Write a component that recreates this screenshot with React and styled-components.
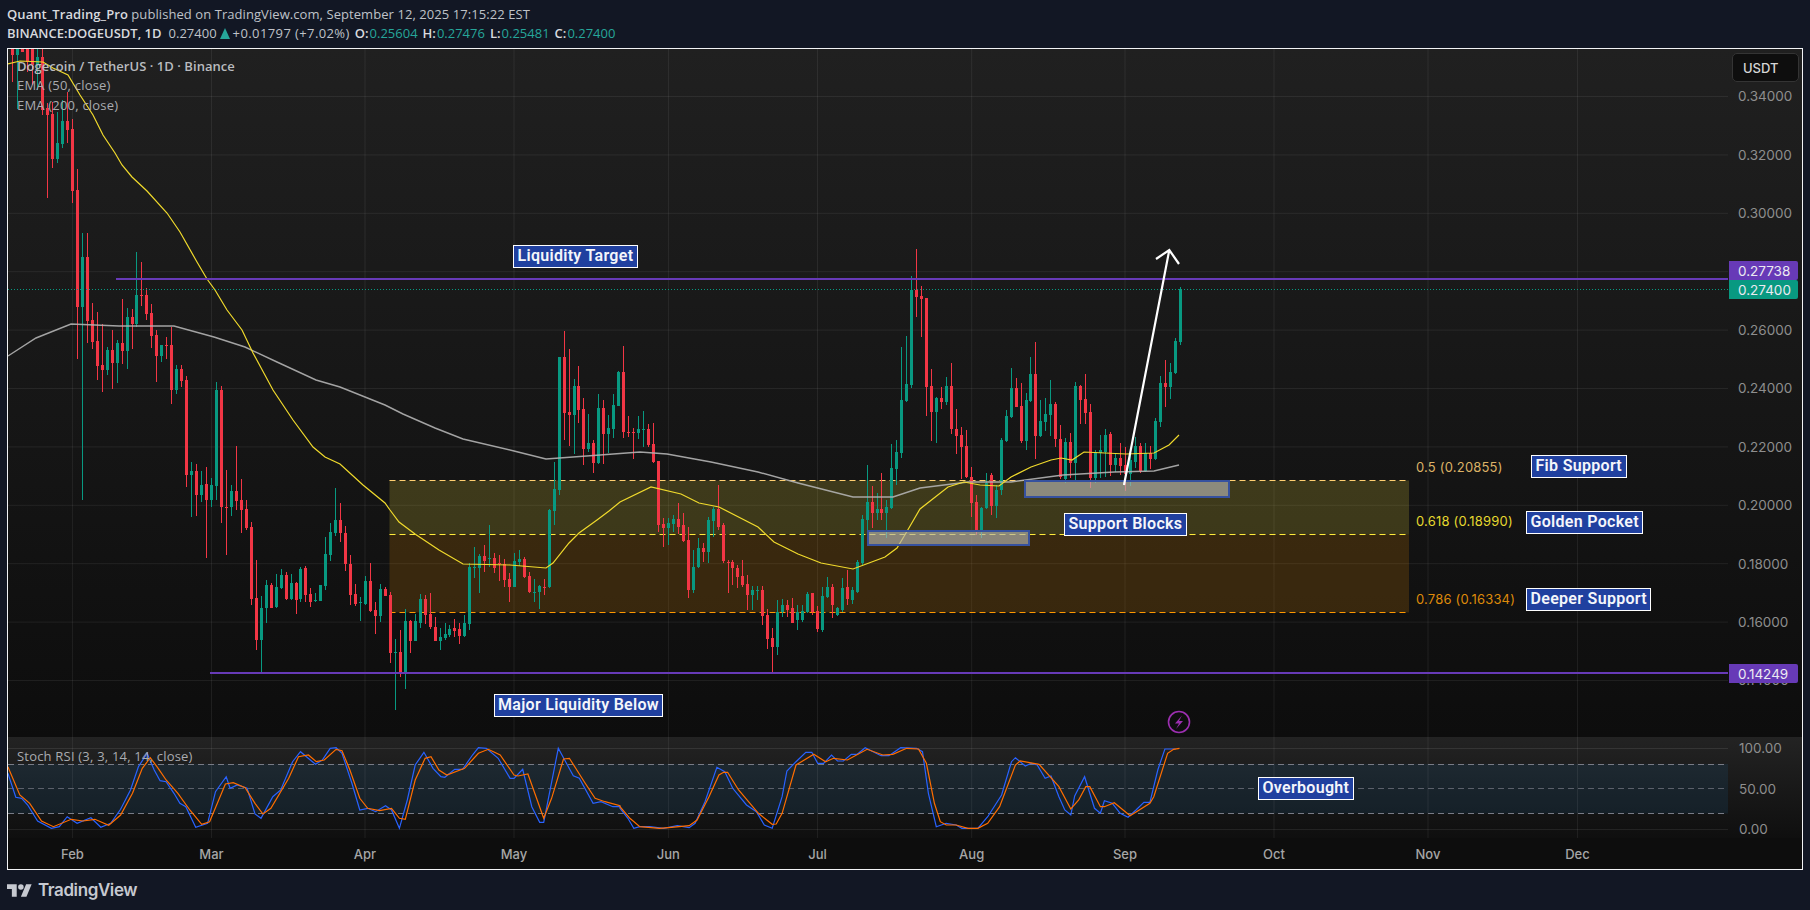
import React from "react";
import styled, { createGlobalStyle } from "styled-components";

const Global = createGlobalStyle`
  html, body { margin: 0; padding: 0; background: #121724; }
  #root { width: 1810px; height: 910px; overflow: hidden; }
`;

const BODY = "'Open Sans', 'Liberation Sans', sans-serif";
const AXIS = "Inter, 'Liberation Sans', sans-serif";

/* [x, bodyTop, bodyBottom, wickHigh, wickLow, isUp] in page pixels */
const CANDLES = [
[12,40,55,40,82,0],[17,40,55,40,109,1],[22,40,52,40,52,0],[27,40,62,40,72,0],[32,40,65,40,85,0],[37,57,65,48,90,1],[42,57,110,49,115,0],[47,108,115,103,198,0],[52,114,159,102,168,0],[57,143,159,112,163,1],[62,121,144,100,148,1],[67,121,130,92,143,0],[72,129,191,119,203,0],[77,190,307,169,359,0],[82,257,307,233,500,1],[87,257,321,233,343,0],
[92,320,342,303,349,0],[97,341,366,312,380,0],[102,365,370,324,392,0],[107,350,370,347,375,1],[112,350,363,330,389,0],[117,343,363,340,383,1],[122,343,351,299,364,0],[127,317,351,308,369,1],[132,317,324,309,349,0],[136.5,295,324,252,327,1],[141,295,296,262,306,0],[146,295,314,288,320,0],[151,313,336,304,348,0],[156,335,356,330,382,0],[161,345,356,345,362,1],[166,345,346,337,359,0],[171,345,390,327,404,0],[176,369,390,365,394,1],[181,369,381,365,387,0],[186,380,475,376,487,0],[191,471,475,462,517,1],[196,471,495,464,516,0],[201,485,495,471,502,1],[206,484,500,467,558,0],[211.5,485,500,478,507,1],[216,390,486,382,500,1],[221.5,390,507,386,523,0],[226,507,508,470,555,0],[231,491,507,485,516,1],[236,491,501,446,510,0],[241,500,510,479,533,0],[246,509,528,500,530,0],[251.5,527,599,522,605,0],[256.5,598,640,560,650,0],[261,608,640,596,672,1],[266.5,585,608,580,623,1],[271,585,608,583,608,0],[276,587,607,574,608,1],[281,575,588,569,589,1],[286,575,599,572,600,0],[291,583,599,574,600,1],[296,583,600,582,614,0],[300.5,569,599,567,602,1],[305,568,595,566,602,0],[310,594,602,588,607,0],[315.5,600,601,593,602,1],[320,585,601,585,601,1],[325.5,554,586,537,590,1],[330.5,532,555,523,561,1],[335,520,533,488,536,1],[340.5,520,533,503,542,0],[345,533,564,526,571,0],[350,564,595,555,605,0],[355.5,594,604,584,606,0],[360.5,602,603,597,621,1],[365,581,604,576,605,1],[370.5,581,611,563,612,0],[375,610,616,602,634,0],[380,589,616,584,622,1],[385.5,589,596,587,596,0],[390,595,653,592,663,0],[395.5,652,653,639,710,1],[400.5,652,673,630,677,0],[405.5,621,673,609,689,1],[410.5,621,641,620,653,0],[415.5,621,641,614,641,1],[420,599,623,594,628,1],[425.5,599,615,595,624,0],[430,614,627,593,629,0],[435,627,641,617,641,0],[440,637,641,628,650,1],[445,634,638,623,640,1],[449.5,629,635,625,637,1],[454.5,628,631,619,637,0],[459.5,629,636,623,644,0],[464.5,623,636,615,637,1],[469.5,567,624,563,630,1],[474.5,567,568,547,578,1],[479,556,568,554,593,1],[484.5,556,561,545,572,0],[489.5,558,559,525,567,1],[494,558,568,553,573,0],[499,563,564,555,581,0],[504.5,564,580,559,587,0],[509,579,587,573,602,0],[514.5,561,587,553,587,1],[519.5,559,562,550,566,1],[524.5,559,577,557,578,0],[529.5,576,592,572,593,0],[534,592,593,579,602,1],[539,586,592,585,609,1],[544,587,588,579,595,0],[549,510,587,509,588,1],[554.5,489,511,462,525,1],[559.5,357,490,357,495,1],
[564.5,357,413,331,440,0],[569.5,412,415,349,446,0],[574.5,386,415,379,454,1],[578.5,386,410,366,423,0],[583.5,409,449,398,465,0],[588.5,443,449,414,452,1],[593.5,443,463,440,473,0],[598.5,408,463,394,464,1],[603.5,408,434,400,464,0],[608.5,428,434,415,453,1],[613.5,405,429,394,438,1],[618.5,372,406,371,406,1],[623.5,372,432,346,438,0],[628.5,432,433,416,437,0],[633.5,432,433,428,459,0],[638.5,429,433,416,439,1],[643.5,429,430,411,447,1],[648.5,429,445,424,447,0],[653.5,444,462,423,463,0],[658.5,461,525,461,532,0],[663.5,524,528,518,547,0],[668.5,523,528,518,545,1],[673.5,519,524,515,532,1],[678.5,519,527,503,534,0],[683.5,525,541,513,542,0],[688.5,540,590,527,598,0],[693.5,567,590,550,593,1],[698.5,548,567,538,568,1],[703,548,552,543,562,0],[708.5,520,552,517,563,1],[713,509,521,507,537,1],[718,509,527,485,530,0],[723,525,561,523,563,0],[728,562,563,560,593,0],[732.5,562,568,560,585,0],[737.5,568,577,565,588,0],[742.5,576,585,560,587,0],[747.5,584,595,575,610,0],[752,590,595,586,610,1],[757.5,590,591,586,600,1],[762.5,590,616,586,625,0],[767.5,615,639,609,649,0],[772.5,638,647,628,672,0],[777.5,612,647,600,655,1],[782.5,605,612,599,617,1],[787,605,610,600,617,0],[792,608,623,598,623,0],[797,612,620,605,630,1],[802,611,620,605,622,1],[807,594,612,592,613,1],[812,593,612,593,615,0],[817,611,629,606,632,0],[822,596,630,587,632,1],[827,587,597,577,598,1],[832,587,605,584,618,0],[837,608,615,607,616,1],[842,588,610,578,612,1],[847,587,599,570,605,0],[852,590,600,587,604,1],[857,562,592,560,593,1],[862.5,519,563,515,565,1],[867,502,520,465,530,1],[872,502,513,486,528,0],[877,509,513,493,520,1],[881.5,509,513,473,520,0],[886,507,513,500,538,1],[891.5,468,508,444,509,1],[896.5,452,469,440,485,1],[901.5,400,453,347,458,1],[906.5,384,401,336,402,1],[911.5,290,385,276,388,1],[916.5,290,297,249,317,0],[921.5,296,299,286,337,0],[926.5,298,387,298,416,0],[931.5,386,412,369,441,0],[936.5,398,412,397,443,1],[941.5,398,402,387,409,0],[946.5,386,402,377,405,1],[951.5,386,429,363,434,0],[956.5,429,436,409,454,0],[961.5,435,447,427,479,0],[966.5,446,477,430,478,0],[971.5,477,503,467,517,0],[976.5,502,531,495,535,0],[981.5,508,531,507,538,1],[986.5,483,508,473,509,1],[991.5,475,506,473,515,0],[996.5,490,506,485,518,1],[1001,440,490,438,495,1],[1006.5,416,441,410,442,1],[1011.5,388,417,368,418,1],[1016.5,388,407,378,407,0],[1021.5,406,441,383,443,0],[1026,400,441,393,450,1],[1030.5,374,401,357,402,1],[1035.5,374,436,342,459,0],[1040.5,421,436,400,437,1],[1045,414,422,398,431,1],[1050.5,404,415,380,436,1],[1055,404,439,402,447,0],[1060,439,477,425,479,0],[1065.5,442,479,438,483,1],[1070.5,442,463,433,478,0],[1075,386,463,382,482,1],[1080.5,386,400,385,424,0],[1085.5,399,413,374,424,0],[1090.5,412,478,404,488,0],[1095.5,452,478,450,483,1],[1100,450,453,435,478,1],[1105.5,435,452,429,477,1],[1110.5,434,465,432,476,0],[1115,458,465,453,472,1],[1120.5,458,466,443,475,0],[1125.5,465,474,447,491,0],[1130,460,474,450,486,1],[1135,446,462,437,468,1],[1140,446,471,443,473,0],[1145,453,471,443,472,1],[1150,453,459,446,469,0],[1155,421,459,418,460,1],[1160,383,422,376,427,1],[1165,383,387,360,407,0],[1170,372,387,363,399,1],[1175,341,373,338,374,1],[1180,289,342,287,345,1],
];

const EMA50 = "7,64 20,61 43,62 53,68 68,75 80,95 93,115 103,135 115,153 122,165 132,177 147,191 167,213 180,232 197,262 207,279 215,290 227,310 242,330 253,353 273,390 293,420 313,447 325,457 340,464 363,485 385,503 390,510 399,522 415,534 439,550 463,564 510,565 534,567 546,568 553,563 569,543 579,533 597,520 609,511 620,502 651,487 681,494 699,503 719,507 758,527 774,542 798,554 821,563 853,569 885,557 897,548 906,533 920,509 948,487 964,482 980,485 999,486 1011,477 1031,467 1051,460 1061,458 1072,460 1084,452 1126,454 1154,453 1169,445 1179,435";
const EMA200 = "8,356 36,338 71,324 119,326 174,326 214,337 245,347 277,362 316,380 340,387 385,405 403,414 435,428 463,439 514,451 546,459 573,457 600,455 640,452 667,454 711,462 758,472 798,483 853,497 893,497 920,488 968,482 1011,482 1063,475 1114,472 1154,471 1179,465";

const mapStoch = (pairs, ox) => pairs.map(([z, y]) => `${(ox + z / 2.529).toFixed(1)},${(710 + y / 3).toFixed(1)}`).join(" ");
const BLUE = mapStoch([[20,190],[40,262],[55,265],[70,285],[95,333],[130,355],[150,350],[170,320],[195,340],[230,323],[255,352],[280,340],[305,298],[330,240],[350,170],[372,130],[390,180],[405,212],[420,215],[440,250],[455,280],[470,290],[495,352],[525,340],[545,245],[572,200],[582,235],[600,225],[625,235],[645,312],[660,325],[690,260],[710,240],[740,155],[760,125],[775,140],[798,163],[815,150],[835,115],[850,113],[865,130],[890,220],[910,300],[930,295],[950,305],[975,287],[990,300],[1010,355],[1030,270],[1050,165],[1072,127],[1095,175],[1115,200],[1125,202],[1150,178],[1170,178],[1195,135],[1210,113],[1230,115],[1260,145],[1290,205],[1300,205],[1322,178],[1345,290],[1365,337],[1375,337],[1412,115],[1435,165],[1450,197],[1465,205],[1500,280],[1520,275],[1550,290],[1568,290]], 0)
  + " " + mapStoch([[0,295],[20,325],[35,355],[50,350],[75,350],[110,355],[145,347],[175,353],[190,340],[215,275],[245,172],[265,185],[285,235],[320,285],[345,305],[365,345],[385,355],[410,260],[422,183],[445,155],[470,127],[485,127],[500,160],[515,160],[535,135],[550,153],[565,153],[585,133],[600,133],[620,113],[660,137],[680,137],[710,113],[750,115],[765,125],[780,250],[800,350],[825,340],[850,345],[865,355],[905,355],[930,320],[965,255],[990,155],[1000,143],[1025,168],[1040,160],[1055,165],[1075,205],[1090,198],[1110,260],[1125,300],[1140,315],[1150,258],[1175,200],[1200,295],[1215,310],[1225,272],[1245,280],[1265,310],[1285,322],[1305,300],[1325,277],[1340,277],[1360,180],[1378,117],[1405,117]], 620);
const ORANGE = mapStoch([[20,170],[50,255],[75,280],[105,333],[135,350],[180,328],[210,333],[240,328],[275,346],[305,315],[335,250],[360,175],[380,143],[400,175],[420,210],[450,250],[480,300],[510,343],[530,335],[570,222],[590,218],[620,233],[645,280],[665,312],[685,295],[730,205],[755,140],[780,135],[800,155],[820,150],[850,118],[865,122],[885,180],[910,265],[930,295],[960,302],[990,295],[1010,325],[1025,328],[1050,210],[1075,145],[1090,140],[1110,180],[1130,195],[1175,175],[1210,130],[1235,118],[1265,135],[1300,195],[1310,198],[1335,192],[1375,325],[1395,265],[1425,147],[1440,145],[1480,220],[1505,265],[1530,275],[1568,287]], 0)
  + " " + mapStoch([[0,290],[25,325],[50,350],[100,355],[130,352],[175,347],[195,330],[225,260],[250,195],[262,187],[272,187],[300,240],[350,310],[385,343],[395,342],[410,310],[445,165],[490,133],[520,155],[540,145],[575,150],[625,118],[665,135],[690,133],[725,115],[755,117],[775,160],[795,280],[810,335],[825,345],[850,345],[880,355],[905,355],[930,340],[960,290],[1000,165],[1012,153],[1060,163],[1110,230],[1140,297],[1160,270],[1178,230],[1188,230],[1215,290],[1225,290],[1250,278],[1290,317],[1340,280],[1350,260],[1385,130],[1400,118],[1415,115]], 620);

const MONTHS = [["Feb",72.4],["Mar",211.5],["Apr",365],["May",514],["Jun",668.4],["Jul",817.5],["Aug",971.7],["Sep",1125],["Oct",1274],["Nov",1428],["Dec",1577.5]];
const PRICE_GRID = [96.5,154.9,213.3,271.7,330.1,388.5,446.9,505.3,563.7,622.1,680.5];
const PRICES = ["0.34000","0.32000","0.30000","0.28000","0.26000","0.24000","0.22000","0.20000","0.18000","0.16000","0.14000"];
const TAGS = [
  ["Liquidity Target", 505, 195],
  ["Major Liquidity Below", 485.5, 644],
  ["Support Blocks", 1056, 463],
  ["Fib Support", 1523, 405],
  ["Golden Pocket", 1518, 461],
  ["Deeper Support", 1518, 538],
];
const FIBS = [
  ["0.5 (0.20855)", "#dcb266", 409],
  ["0.618 (0.18990)", "#e6d92f", 463],
  ["0.786 (0.16334)", "#de8a0a", 541],
];
const OHLC = [["O:", "0.25604"], ["H:", "0.27476"], ["L:", "0.25481"], ["C:", "0.27400"]];

const Page = styled.div`
  width: 1810px; height: 910px; background: #121724; display: flex; flex-direction: column; overflow: hidden;
`;
const Header = styled.header`
  height: 48px; box-sizing: border-box; padding: 5px 0 0 7px; display: flex; flex-direction: column;
  font: 400 13px/19px ${BODY}; color: #bfc2c8;
`;
const HeaderLine = styled.div`
  display: flex; align-items: center; height: 19px; white-space: pre;
`;
const PublishLine = styled(HeaderLine)`
  letter-spacing: 0.07px;
`;
const Strong = styled.span`
  font-weight: 600; color: #d8dade;
`;
const Last = styled.span`
  margin-left: 7px;
`;
const Change = styled.span`
  letter-spacing: 0.4px;
`;
const OhlcLabel = styled(Strong)`
  margin-left: 5px;
`;
const Up = styled.span`
  color: #26a69a; margin-left: 1px;
`;
const Triangle = styled.i`
  width: 0; height: 0; border-left: 5.5px solid transparent; border-right: 5.5px solid transparent;
  border-bottom: 11px solid #26a69a; margin: 0 3px;
`;
const Frame = styled.main`
  margin-left: 7px; width: 1796px; height: 822px; box-sizing: border-box; border: 1px solid #f2f3f5;
  display: flex; flex-direction: column; background: #0d0d0d;
`;
const Pane = styled.section`
  display: flex; height: ${p => p.$h}px; background: linear-gradient(${p => p.$from}, ${p => p.$to});
`;
const Plot = styled.div`
  position: relative; width: 1720px; height: 100%;
`;
const ChartSvg = styled.svg`
  display: block;
`;
const Legend = styled.div`
  position: absolute; left: 9px; top: 8px; display: flex; flex-direction: column; gap: 0.4px;
  font: 400 13px/19px ${BODY}; letter-spacing: 0.2px; color: #a9abb0;
`;
const LegendTitle = styled.div`
  font-weight: 600; color: #b9bbbf; letter-spacing: 0.05px;
`;
const StochTitle = styled.div`
  position: absolute; left: 9px; top: 10px; font: 400 13px/19px ${BODY}; letter-spacing: 0.2px; color: #a9abb0;
`;
const Tag = styled.div`
  position: absolute; left: ${p => p.$x}px; top: ${p => p.$y}px; box-sizing: border-box; height: 23px;
  padding: 0 3.5px; border: 1.5px solid #fff; background: #20409f; color: #f4f6fb;
  font: 600 16px/20px Roboto, 'Liberation Sans', sans-serif; letter-spacing: 0.3px; white-space: nowrap;
`;
const FibLabel = styled.div`
  position: absolute; left: 1408px; top: ${p => p.$y}px; font: 400 13px/18px ${AXIS}; letter-spacing: 0.2px; color: ${p => p.$c}; white-space: nowrap;
`;
const PriceAxis = styled.div`
  position: relative; width: 74px; height: 100%; box-sizing: border-box; padding-left: ${p => p.$left}px;
  font: 400 13.5px/16px ${AXIS}; color: #8e8e8e;
`;
const TickStack = styled.div`
  display: flex; flex-direction: column; margin-top: ${p => p.$top}px;
`;
const Tick = styled.div`
  height: ${p => p.$h}px; display: flex; align-items: center;
`;
const CurrencyBox = styled.div`
  position: absolute; left: 4px; top: 4px; width: 67px; height: 29px; box-sizing: border-box;
  background: #0e0e0e; border: 1px solid #343434; border-radius: 5px; padding-left: 10px;
  display: flex; align-items: center; font: 500 13px ${AXIS}; color: #d6d6d6;
`;
const PriceTag = styled.div`
  position: absolute; left: 1px; top: ${p => p.$y}px; width: 69px; height: ${p => p.$h}px; box-sizing: border-box;
  padding-left: 9px; display: flex; align-items: center; background: ${p => p.$bg}; color: #eceaf2; border-radius: 0 2px 2px 0;
  font: 400 13.5px ${AXIS};
`;
const TimeAxis = styled.nav`
  height: 31px; display: flex; align-items: center;
`;
const TimeLabel = styled.span`
  width: 60px; text-align: center; flex: none; font: 500 13px ${AXIS}; color: #a6a6a6;
`;
const Footer = styled.footer`
  height: 40px; padding-left: 7px; display: flex; align-items: center; gap: 6px; color: #c6c9d0;
`;
const Brand = styled.span`
  font: 600 17px Inter, 'Liberation Sans', sans-serif; letter-spacing: -0.4px; color: #c6c9d0;
`;

const VerticalGrid = ({ y1, y2 }) => MONTHS.map(([m, x]) => (
  <line key={m} x1={x} x2={x} y1={y1} y2={y2} stroke="#fff" strokeOpacity=".07" />
));

const Candles = () => (
  <g shapeRendering="crispEdges">
    {CANDLES.map(([x, t, b, hi, lo, up], i) => {
      const c = up ? "#089981" : "#f23645";
      const px = Math.floor(x);
      return (
        <g key={i} fill={c}>
          <rect x={px} y={hi} width="1" height={lo - hi} />
          <rect x={px - 1} y={t} width="3" height={Math.max(b - t, 1)} />
        </g>
      );
    })}
  </g>
);

export default function App() {
  return (
    <Page>
      <Global />
      <Header>
        <PublishLine><Strong>Quant_Trading_Pro</Strong> published on TradingView.com, September 12, 2025 17:15:22 EST</PublishLine>
        <HeaderLine>
          <Strong>BINANCE:DOGEUSDT, 1D</Strong>
          <Last>0.27400</Last>
          <Triangle />
          <Change>+0.01797 (+7.02%)</Change>
          {OHLC.map(([k, v]) => (
            <React.Fragment key={k}>
              <OhlcLabel>{k}</OhlcLabel>
              <Up>{v}</Up>
            </React.Fragment>
          ))}
        </HeaderLine>
      </Header>
      <Frame>
        <Pane $h={688} $from="#202020" $to="#0d0d0d">
          <Plot>
            <ChartSvg width="1720" height="688" viewBox="8 49 1720 688">
              {PRICE_GRID.map(y => <line key={y} x1="8" x2="1728" y1={y} y2={y} stroke="#fff" strokeOpacity=".07" />)}
              <VerticalGrid y1={49} y2={737} />
              <rect x="389.5" y="480.5" width="1019.5" height="54" fill="#ffeb3b" fillOpacity=".18" />
              <rect x="389.5" y="534.5" width="1019.5" height="78" fill="#ff9800" fillOpacity=".17" />
              <line x1="389.5" x2="1409" y1="480.5" y2="480.5" stroke="#ffcf70" strokeDasharray="6 4" />
              <line x1="389.5" x2="1409" y1="534.5" y2="534.5" stroke="#ffeb3b" strokeDasharray="6 4" />
              <line x1="389.5" x2="1409" y1="612.5" y2="612.5" stroke="#ff9800" strokeDasharray="6 4" />
              <Candles />
              <polyline points={EMA200} fill="none" stroke="#b2b2b2" strokeOpacity=".9" strokeWidth="1.4" />
              <polyline points={EMA50} fill="none" stroke="#f0da2c" strokeWidth="1.2" />
              <line x1="8" x2="1728" y1="289.5" y2="289.5" stroke="#089981" strokeDasharray="1 2" />
              <rect x="116" y="278" width="1612" height="2" fill="#673ab7" />
              <rect x="210" y="672" width="1518" height="2" fill="#673ab7" />
              <rect x="868" y="531" width="161" height="14" fill="#b4b4b0" fillOpacity=".66" stroke="#36519f" strokeWidth="2" />
              <rect x="1025" y="481" width="204" height="16" fill="#b4b4b0" fillOpacity=".66" stroke="#36519f" strokeWidth="2" />
              <path d="M1124 485 L1169.3 250 M1156 259 L1169.3 250 L1179 264" fill="none" stroke="#fff" strokeWidth="2.2" />
              <circle cx="1179" cy="722" r="10.5" fill="none" stroke="#9c2fb0" strokeWidth="1.6" />
              <path d="M1182 715.5 L1175 723.5 H1179 L1176 729 L1183 721 H1179 Z" fill="#9c2fb0" />
            </ChartSvg>
            <Legend>
              <LegendTitle>Dogecoin / TetherUS · 1D · Binance</LegendTitle>
              <div>EMA (50, close)</div>
              <div>EMA (200, close)</div>
            </Legend>
            {TAGS.map(([t, x, y]) => <Tag key={t} $x={x} $y={y + 1}>{t}</Tag>)}
            {FIBS.map(([t, c, y]) => <FibLabel key={t} $c={c} $y={y}>{t}</FibLabel>)}
          </Plot>
          <PriceAxis $left={10}>
            <TickStack $top={18.3}>
              {PRICES.map(p => <Tick key={p} $h={58.4}>{p}</Tick>)}
            </TickStack>
            <CurrencyBox>USDT</CurrencyBox>
            <PriceTag $y={212} $h={19} $bg="#673ab7">0.27738</PriceTag>
            <PriceTag $y={231} $h={19} $bg="#089981">0.27400</PriceTag>
            <PriceTag $y={615} $h={19} $bg="#673ab7">0.14249</PriceTag>
          </PriceAxis>
        </Pane>
        <Pane $h={101} $from="#232323" $to="#0f0f0f">
          <Plot>
            <ChartSvg width="1720" height="101" viewBox="8 737 1720 101">
              <rect x="8" y="764" width="1720" height="49.5" fill="#2196f3" fillOpacity=".09" />
              <line x1="8" x2="1728" y1="748.5" y2="748.5" stroke="#fff" strokeOpacity=".09" />
              <line x1="8" x2="1728" y1="829.5" y2="829.5" stroke="#fff" strokeOpacity=".08" />
              <VerticalGrid y1={737} y2={838} />
              {[764.5, 788.5, 813.5].map(y => (
                <line key={y} x1="8" x2="1728" y1={y} y2={y} stroke="#787b86" strokeDasharray="6 4" strokeOpacity={y === 788.5 ? .7 : 1} />
              ))}
              <polyline points={BLUE} fill="none" stroke="#2962ff" strokeWidth="1.2" />
              <polyline points={ORANGE} fill="none" stroke="#ff6d00" strokeWidth="1.2" />
            </ChartSvg>
            <StochTitle>Stoch RSI (3, 3, 14, 14, close)</StochTitle>
            <Tag $x={1250} $y={40}>Overbought</Tag>
          </Plot>
          <PriceAxis $left={11}>
            <TickStack $top={-9}>
              {["100.00", "50.00", "0.00"].map(p => <Tick key={p} $h={40.5}>{p}</Tick>)}
            </TickStack>
          </PriceAxis>
        </Pane>
        <TimeAxis>
          {MONTHS.map(([m, x], i) => (
            <TimeLabel key={m} style={{ marginLeft: i === 0 ? x - 38 : x - MONTHS[i - 1][1] - 60 }}>{m}</TimeLabel>
          ))}
        </TimeAxis>
      </Frame>
      <Footer>
        <svg width="25" height="13" viewBox="0 4 36 18" fill="currentColor">
          <path d="M14 22H7V11H0V4h14v18zM28 22h-8l7.5-18h8L28 22z" />
          <circle cx="20" cy="8" r="4" />
        </svg>
        <Brand>TradingView</Brand>
      </Footer>
    </Page>
  );
}
